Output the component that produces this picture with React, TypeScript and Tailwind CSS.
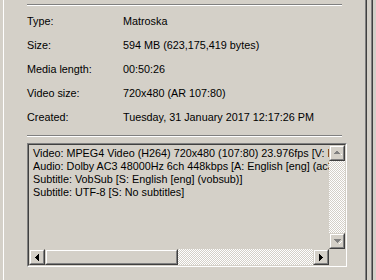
import React from "react";

const font = { fontFamily: '"Liberation Sans", Arial, sans-serif' };

function Raised({ className = "", children }: { className?: string; children?: React.ReactNode }) {
  return (
    <div className={`border border-t-[#d4d0c8] border-l-[#d4d0c8] border-b-[#404040] border-r-[#404040] ${className}`}>
      <div className="w-full h-full border border-t-white border-l-white border-b-[#808080] border-r-[#808080] bg-[#d4d0c8] flex items-center justify-center">
        {children}
      </div>
    </div>
  );
}

const UpDisabled = () => (
  <svg width="9" height="6" viewBox="0 0 9 6" shapeRendering="crispEdges">
    <path d="M4 1h1v1h1v1h1v1H1V3h1V2h1V1z" fill="#808080" />
    <path d="M2 5h6V4h1v1h-1z" fill="#ffffff" />
  </svg>
);
const DownDisabled = () => (
  <svg width="9" height="6" viewBox="0 0 9 6" shapeRendering="crispEdges">
    <path d="M1 1h7v1H7v1H6v1H5v1H4V4H3V3H2V2H1z" fill="#808080" />
    <path d="M5 6h1V5h1V4h1V3h1v1H8v1H7v1z" fill="#ffffff" />
  </svg>
);
const LeftArrow = () => (
  <svg width="4" height="7" viewBox="0 0 4 7" shapeRendering="crispEdges">
    <path d="M3 0h1v7H3V6H2V5H1V4H0V3h1V2h1V1h1z" fill="#000" />
  </svg>
);
const RightArrow = () => (
  <svg width="4" height="7" viewBox="0 0 4 7" shapeRendering="crispEdges">
    <path d="M0 0h1v1h1v1h1v1h1v1H3v1H2v1H1v1H0z" fill="#000" />
  </svg>
);

const dither =
  "bg-[repeating-conic-gradient(#ffffff_0_25%,#d4d0c8_0_50%)] bg-[length:2px_2px]";

function Separator() {
  return <div className="w-[315px] h-[2px] border-t border-t-[#808080] border-b border-b-white" />;
}

const rows: [string, string][] = [
  ["Type:", "Matroska"],
  ["Size:", "594 MB (623,175,419 bytes)"],
  ["Media length:", "00:50:26"],
  ["Video size:", "720x480 (AR 107:80)"],
  ["Created:", "Tuesday, 31 January 2017 12:17:26 PM"],
];

const lines = [
  "Video: MPEG4 Video (H264) 720x480 (107:80) 23.976fps [V: English [eng] (h264 high L4.0, yuv420p, 720x480)]",
  "Audio: Dolby AC3 48000Hz 6ch 448kbps [A: English [eng] (ac3, 48000 Hz, 5.1(side), fltp, 448 kb/s)]",
  "Subtitle: VobSub [S: English [eng] (vobsub)]",
  "Subtitle: UTF-8 [S: No subtitles]",
];

export default function App() {
  return (
    <div className="w-[376px] h-[280px] bg-[#d4d0c8] flex text-black text-[10.8px] leading-[13px] overflow-hidden" style={font}>
      <div className="w-[3px] shrink-0" />
      <div className="w-px shrink-0 bg-white" />
      <div className="w-[361px] shrink-0 flex flex-col pl-[23px] pt-[4px]">
        <Separator />
        <div className="mt-[3px] flex flex-col">
          {rows.map(([k, v]) => (
            <div key={k} className="h-[24px] flex items-center whitespace-nowrap">
              <div className="w-[96px]">{k}</div>
              <div>{v}</div>
            </div>
          ))}
        </div>
        <div className="mt-[6px]">
          <Separator />
        </div>
        <div className="mt-[6px] w-[320px] h-[124px] border border-t-[#808080] border-l-[#808080] border-b-white border-r-white">
          <div className="w-full h-full border border-t-[#404040] border-l-[#404040] border-b-[#d4d0c8] border-r-[#d4d0c8] grid grid-cols-[300px_16px] grid-rows-[104px_16px]">
            <div className="overflow-hidden whitespace-nowrap pl-[4px] pt-[2px]">
              {lines.map((l) => (
                <div key={l}>{l}</div>
              ))}
            </div>
            <div className="flex flex-col">
              <Raised className="w-[16px] h-[16px] shrink-0">
                <UpDisabled />
              </Raised>
              <div className={`flex-1 ${dither}`} />
              <Raised className="w-[16px] h-[16px] shrink-0">
                <DownDisabled />
              </Raised>
            </div>
            <div className="flex">
              <Raised className="w-[16px] h-[16px] shrink-0">
                <LeftArrow />
              </Raised>
              <Raised className="w-[133px] h-[16px] shrink-0" />
              <div className={`flex-1 ${dither}`} />
              <Raised className="w-[16px] h-[16px] shrink-0">
                <RightArrow />
              </Raised>
            </div>
            <div className="bg-[#d4d0c8]" />
          </div>
        </div>
      </div>
      <div className="w-px shrink-0 bg-[#808080]" />
      <div className="w-px shrink-0 bg-[#404040]" />
      <div className="w-[4px] shrink-0" />
      <div className="w-px shrink-0 bg-[#808080]" />
      <div className="w-px shrink-0 bg-[#404040]" />
    </div>
  );
}
